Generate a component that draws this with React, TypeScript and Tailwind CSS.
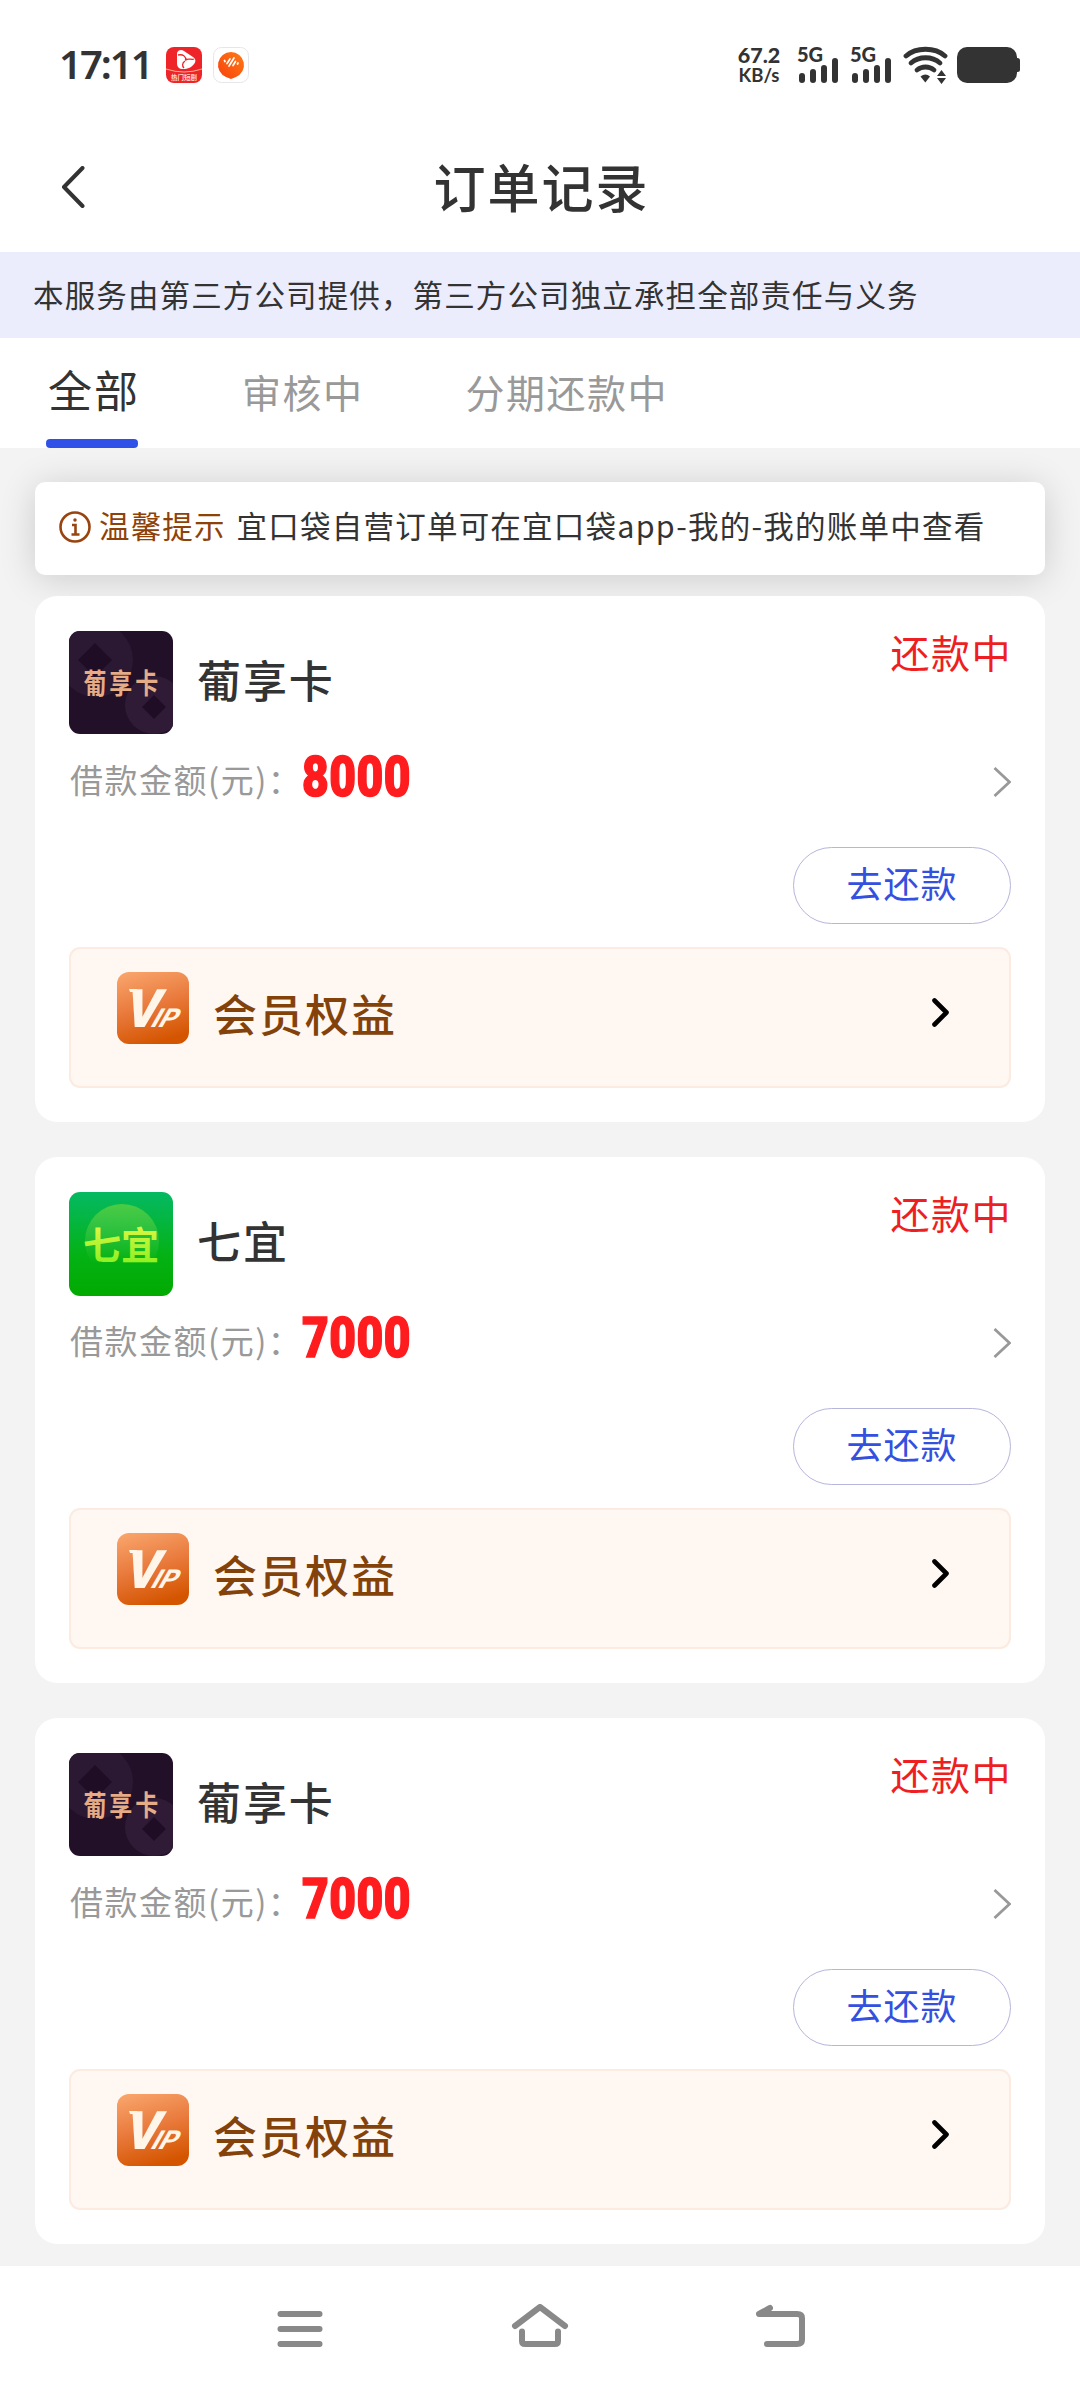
import React from "react";

type Brand = "puxiang" | "qiyi";
type Order = { brand: Brand; name: string; amount: string };

const orders: Order[] = [
  { brand: "puxiang", name: "葡享卡", amount: "8000" },
  { brand: "qiyi", name: "七宜", amount: "7000" },
  { brand: "puxiang", name: "葡享卡", amount: "7000" },
];

function Signal() {
  return (
    <div className="relative h-[38px] w-[42px]">
      <span className="absolute -top-[3px] -left-[1px] font-['Lato'] text-[20px] leading-[20px] font-black">5G</span>
      <svg viewBox="0 0 42 38" className="h-[38px] w-[42px]" fill="#333">
        <rect x="1" y="26" width="6" height="10" rx="3" />
        <rect x="12" y="22" width="6" height="14" rx="3" />
        <rect x="23" y="18" width="6" height="18" rx="3" />
        <rect x="34" y="11" width="6" height="25" rx="3" />
      </svg>
    </div>
  );
}

function StatusBar() {
  return (
    <div className="flex h-[130px] items-start text-[#333]">
      <div className="mt-[41px] ml-[59px] w-[94px] font-['Noto_Sans'] text-[40px] leading-[46px] font-semibold tracking-[-2px] whitespace-nowrap">
        17:11
      </div>
      <svg viewBox="0 0 36 36" className="mt-[47px] ml-[13px] h-9 w-9">
        <rect width="36" height="36" rx="8" fill="#ee2429" />
        <path d="M11 6c1-3 4-4 7-2l9 6c3 2 3 5 1 7-2 3-6 5-11 5-4 0-6-2-6-6z" fill="#fff" />
        <path d="M12 8c5-1 8 1 8 6M28 12c-2 1-6-1-9 1M18 21c-2-2-2-5 1-7" stroke="#ee2429" strokeWidth="1.300" fill="none" />
        <path d="M0 22q18 6 36 0" stroke="#ffb08a" strokeWidth="1" fill="none" />
        <text x="18" y="33" textAnchor="middle" fontSize="6.500" fontWeight="700" fill="#ffd9c0" fontFamily="Noto Sans CJK SC">热门短剧</text>
      </svg>
      <svg viewBox="0 0 36 36" className="mt-[47px] ml-[11px] h-9 w-9">
        <defs>
          <linearGradient id="orb" x1="0" y1="1" x2="1" y2="0">
            <stop offset="0" stopColor="#f8400c" />
            <stop offset="1" stopColor="#ff7b14" />
          </linearGradient>
        </defs>
        <rect x=".5" y=".5" width="35" height="35" rx="8" fill="#fff" stroke="#e6e6ea" />
        <path d="M18 5a13 13 0 0 1 5 25l-5 2-5-2A13 13 0 0 1 18 5z" fill="url(#orb)" />
        <path d="M11.500 13.500l.500 1M14 16.500l3-4.500M16 19l5-8M20 18.500l2.500-4M24.500 17l.500-1" stroke="#fff" strokeWidth="1.700" strokeLinecap="round" />
      </svg>
      <div className="mt-[44px] ml-[487px] w-[46px] text-center font-['Lato'] font-black whitespace-nowrap">
        <div className="text-[21.500px] leading-[22px]">67.2</div>
        <div className="text-[18.500px] leading-[19px] font-bold">KB/s</div>
      </div>
      <div className="mt-[47px] ml-[16px] flex gap-[11px]">
        <Signal />
        <Signal />
      </div>
      <svg viewBox="0 0 46 38" className="mt-[46px] ml-[9px] h-[38px] w-[46px]" fill="none" stroke="#333" strokeWidth="4.800" strokeLinecap="round">
        <path d="M4 10C14 1 33 1 43 10" />
        <path d="M9 17C17 10 30 10 38 17" />
        <path d="M15 24C20 20 27 20 32 24" />
        <path d="M18.500 30.500q5-4 9.500 0l-4.700 6z" fill="#333" stroke="none" />
        <path d="M35 30l4.500-6 4.500 6zM35 32l4.500 6 4.500-6z" fill="#333" stroke="none" />
      </svg>
      <svg viewBox="0 0 63 36" className="mt-[47px] ml-[9px] h-9 w-[63px]" fill="#333">
        <rect width="60" height="36" rx="10" />
        <rect x="57" y="11" width="6" height="14" rx="2.500" />
      </svg>
    </div>
  );
}

function BrandLogo({ brand }: { brand: Brand }) {
  if (brand === "qiyi") {
    return (
      <svg viewBox="0 0 104 104" className="h-[104px] w-[104px] shrink-0">
        <defs>
          <linearGradient id="green" x1="0" y1="0" x2="0" y2="1">
            <stop offset="0" stopColor="#05b963" />
            <stop offset=".6" stopColor="#04b216" />
            <stop offset="1" stopColor="#02aa00" />
          </linearGradient>
          <linearGradient id="halo" x1="0" y1="0" x2="0" y2="1">
            <stop offset="0" stopColor="#4ccb43" />
            <stop offset=".8" stopColor="#4ccb43" stopOpacity="0" />
          </linearGradient>
          <linearGradient id="lime" x1="0" y1="0" x2="0" y2="1">
            <stop offset="0" stopColor="#f5f84c" />
            <stop offset="1" stopColor="#7ff01c" />
          </linearGradient>
        </defs>
        <rect width="104" height="104" rx="11" fill="url(#green)" />
        <circle cx="53" cy="49" r="37" fill="url(#halo)" />
        <text x="52" y="66.500" textAnchor="middle" fontSize="38" fontWeight="700" fill="url(#lime)" fontFamily="Noto Sans CJK SC">七宜</text>
      </svg>
    );
  }
  return (
    <svg viewBox="0 0 104 104" className="h-[104px] w-[104px] shrink-0">
      <defs>
        <clipPath id="tile"><rect width="104" height="103" rx="11" /></clipPath>
      </defs>
      <g clipPath="url(#tile)">
        <rect width="104" height="104" fill="#221028" />
        <circle cx="27" cy="29" r="37" fill="#2b1832" />
        <path d="M26 12l17 17-17 17L9 29z" fill="#1f0d26" />
        <circle cx="85" cy="74" r="29" fill="#2f1b35" />
        <path d="M85 64l12 12-12 12-12-12z" fill="#1f0d26" />
        <g transform="translate(0 62.500) scale(.96 1.180)" fontSize="24" fontWeight="700" fill="#e5ac85" fontFamily="Noto Sans CJK SC" textAnchor="middle">
          <text x="27" y="0">葡</text>
          <text x="54" y="0">享</text>
          <text x="81" y="0">卡</text>
        </g>
      </g>
    </svg>
  );
}

function VipIcon() {
  return (
    <svg viewBox="0 0 72 72" className="h-[72px] w-[72px] shrink-0">
      <defs>
        <linearGradient id="vip" x1=".2" y1="0" x2=".5" y2="1">
          <stop offset="0" stopColor="#f8a36a" />
          <stop offset=".5" stopColor="#e97a3c" />
          <stop offset="1" stopColor="#d45500" />
        </linearGradient>
      </defs>
      <rect width="72" height="72" rx="12" fill="url(#vip)" />
      <text transform="translate(5.500 55) skewX(-15) scale(.98 1)" fontSize="53" fontWeight="900" fill="#fff5e9" fontFamily="Roboto">V</text>
      <path d="M12 17h8v3h-7z" fill="#fff5e9" />
      <text transform="translate(32 55) skewX(-30)" fontSize="26" fontWeight="800" fill="#fff5e9" fontFamily="Roboto">IP</text>
    </svg>
  );
}

function OrderCard({ order }: { order: Order }) {
  return (
    <section className="h-[526px] rounded-[22px] bg-white px-[34px] pt-[35px]">
      <div className="flex h-[104px] items-start">
        <BrandLogo brand={order.brand} />
        <h2 className="mt-[16px] ml-6 text-[44px] leading-[64px] font-medium tracking-[1.900px]">{order.name}</h2>
        <span className="mt-[-9px] mr-[-1px] ml-auto text-[39px] leading-[58px] tracking-[1.500px] text-[#ee1f23]">还款中</span>
      </div>
      <div className="mt-[11px] flex h-[68px] items-center">
        <span className="w-[233px] pl-px text-[33px] tracking-[1.500px] whitespace-nowrap text-[#999]">借款金额(元)：</span>
        <span className="mt-[-6px] inline-block origin-left scale-x-[.84] font-['Roboto'] text-[55px] leading-[60px] font-black tracking-[.6px] text-[#ff1c1e] [-webkit-text-stroke:1.5px_#ff1c1e]">{order.amount}</span>
        <svg viewBox="0 0 18 30" className="mt-[4px] ml-auto h-[30px] w-[18px]" fill="none" stroke="#999" strokeWidth="2.800">
          <path d="M1.500 1l15 14-15 14" />
        </svg>
      </div>
      <button className="mt-[33px] ml-auto flex h-[77px] w-[218px] items-center justify-center rounded-full border border-[#b6b5dc] pb-[7px] text-[36px] tracking-[1px] text-[#3450df]">
        去还款
      </button>
      <div className="mt-[23px] flex h-[141px] items-start rounded-[11px] border-2 border-[#fbebe1] bg-[#fef7f2] pt-[23px] pr-[60px] pl-[46px]">
        <VipIcon />
        <span className="mt-[9px] ml-6 text-[44px] leading-[64px] font-medium tracking-[2px] text-[#84420b]">会员权益</span>
        <svg viewBox="0 0 17 29" className="mt-[26px] ml-auto h-[29px] w-[17px]" fill="none" stroke="#000" strokeWidth="4.600" strokeLinecap="round" strokeLinejoin="round">
          <path d="M2.500 2.500l12 12-12 12" />
        </svg>
      </div>
    </section>
  );
}

export default function App() {
  return (
    <div className="flex h-[2392px] w-[1080px] flex-col overflow-hidden bg-white font-['Noto_Sans_CJK_SC',sans-serif] text-[#333]">
      <StatusBar />
      <header className="relative flex h-[122px] items-start justify-center">
        <svg viewBox="0 0 24 42" className="absolute top-[36px] left-[61px] h-[42px] w-6" fill="none" stroke="#333" strokeWidth="4" strokeLinecap="round" strokeLinejoin="round">
          <path d="M21.500 2L3 21l18.500 19" />
        </svg>
        <h1 className="mt-[18px] ml-[3px] text-[52px] leading-[76px] font-medium tracking-[2px]">订单记录</h1>
      </header>
      <div className="h-[86px] bg-[#ebedfd] pl-[33px] text-[30.500px] leading-[84px] tracking-[1.130px] whitespace-nowrap text-[#333]">
        本服务由第三方公司提供，第三方公司独立承担全部责任与义务
      </div>
      <nav className="flex h-[110px] items-start pl-[46px] text-[#999]">
        <div className="relative h-[110px] w-[92px] pl-[2px] text-[44px] leading-[103px] tracking-[2px] whitespace-nowrap text-[#333]">
          全部
          <span className="absolute bottom-0 left-0 h-[9px] w-[92px] rounded-[4px] bg-[#3051e8]" />
        </div>
        <div className="ml-[104px] text-[39px] leading-[106px] tracking-[1.500px]">审核中</div>
        <div className="ml-[102px] text-[39px] leading-[106px] tracking-[1.500px]">分期还款中</div>
      </nav>
      <main className="h-[1818px] bg-[#f3f3f3] px-[35px] pt-[34px]">
        <div className="flex h-[93px] items-center rounded-[10px] bg-white pl-6 shadow-[0_4px_36px_rgba(0,0,0,0.16)]">
          <svg viewBox="0 0 32 32" className="-mt-[3px] h-8 w-8" fill="none" stroke="#99440f" strokeWidth="2.600">
            <circle cx="16" cy="16" r="14.500" />
            <path d="M13 14h3.500v9M12.500 23.500h8" />
            <circle cx="16" cy="9" r="1" fill="#99440f" strokeWidth="1.500" />
          </svg>
          <span className="ml-[8px] pb-[5px] text-[30.500px] tracking-[1.130px] whitespace-nowrap text-[#8f4208]">温馨提示</span>
          <span className="ml-[11px] pb-[5px] text-[30.500px] tracking-[1.230px] whitespace-nowrap">宜口袋自营订单可在宜口袋app-我的-我的账单中查看</span>
        </div>
        <div className="mt-[21px] flex flex-col gap-[35px]">
          {orders.map((order, i) => (
            <OrderCard key={i} order={order} />
          ))}
        </div>
      </main>
      <footer className="flex h-[126px] items-start justify-between bg-white pt-[38px] pr-[274px] pl-[276px]">
        <svg viewBox="0 0 48 44" className="h-11 w-12" fill="#898989">
          <rect x="1.500" y="7" width="45" height="6" rx="3" />
          <rect x="1.500" y="22" width="45" height="6" rx="3" />
          <rect x="1.500" y="37" width="45" height="6" rx="3" />
        </svg>
        <svg viewBox="0 0 58 44" className="h-11 w-[58px]" fill="none" stroke="#898989" strokeWidth="6" strokeLinecap="round" strokeLinejoin="round">
          <path d="M4 22L29 3l25 19" />
          <path d="M11 27.500V37q0 3 3 3h30q3 0 3-3v-9.500" />
        </svg>
        <svg viewBox="0 0 50 44" className="h-11 w-[50px]" fill="none" stroke="#898989" strokeWidth="6" strokeLinecap="round" strokeLinejoin="round">
          <path d="M14 4L3 10h38q5 0 5 4v22q0 4-5 4H11" />
        </svg>
      </footer>
    </div>
  );
}
